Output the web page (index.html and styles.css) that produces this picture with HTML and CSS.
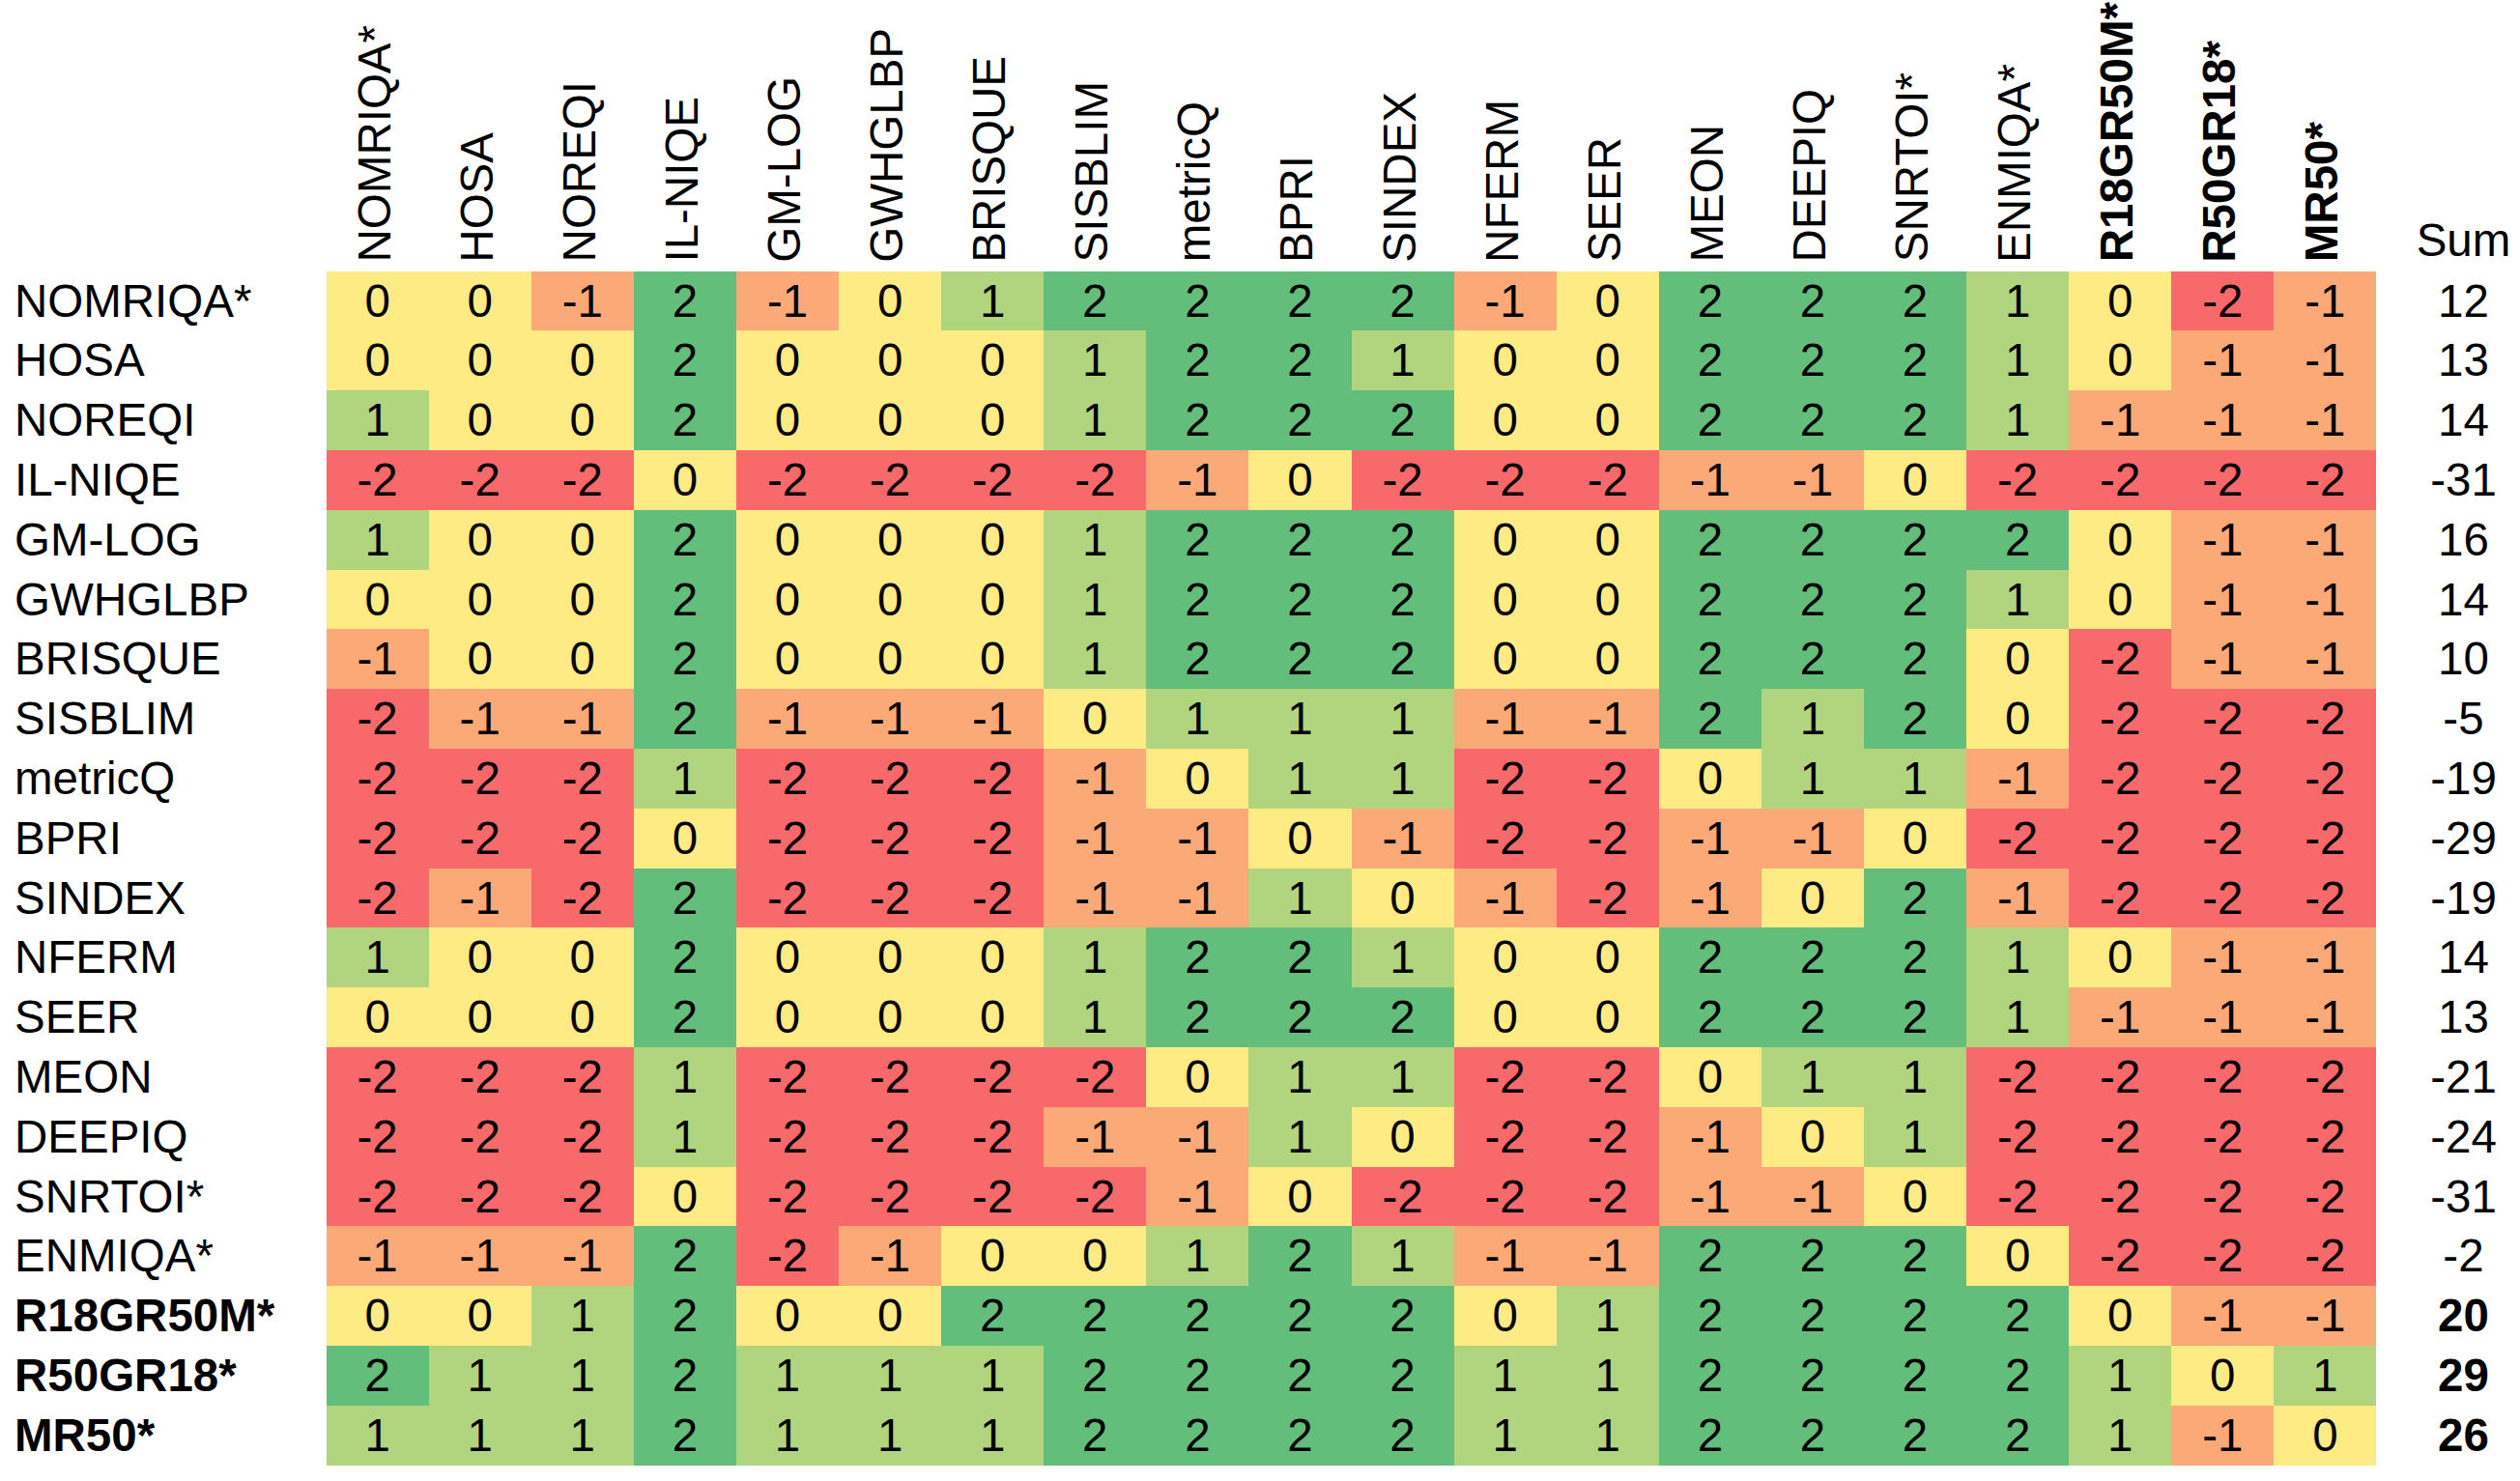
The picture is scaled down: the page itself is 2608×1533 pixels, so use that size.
FILE: index.html
```html
<!DOCTYPE html>
<html lang="en">
<head>
<meta charset="utf-8">
<title>Pairwise comparison matrix</title>
<link rel="stylesheet" href="styles.css">
</head>
<body>
<div class="matrix">
  <div class="corner"></div>
  <div class="hd"><span class="vt">NOMRIQA*</span></div>
  <div class="hd"><span class="vt">HOSA</span></div>
  <div class="hd"><span class="vt">NOREQI</span></div>
  <div class="hd"><span class="vt">IL-NIQE</span></div>
  <div class="hd"><span class="vt">GM-LOG</span></div>
  <div class="hd"><span class="vt">GWHGLBP</span></div>
  <div class="hd"><span class="vt">BRISQUE</span></div>
  <div class="hd"><span class="vt">SISBLIM</span></div>
  <div class="hd"><span class="vt">metricQ</span></div>
  <div class="hd"><span class="vt">BPRI</span></div>
  <div class="hd"><span class="vt">SINDEX</span></div>
  <div class="hd"><span class="vt">NFERM</span></div>
  <div class="hd"><span class="vt">SEER</span></div>
  <div class="hd"><span class="vt">MEON</span></div>
  <div class="hd"><span class="vt">DEEPIQ</span></div>
  <div class="hd"><span class="vt">SNRTOI*</span></div>
  <div class="hd"><span class="vt">ENMIQA*</span></div>
  <div class="hd"><span class="vt bold">R18GR50M*</span></div>
  <div class="hd"><span class="vt bold">R50GR18*</span></div>
  <div class="hd"><span class="vt bold">MR50*</span></div>
  <div class="sumhd">Sum</div>

  <div class="rl">NOMRIQA*</div>
  <div class="c z">0</div><div class="c z">0</div><div class="c n1">-1</div><div class="c p2">2</div><div class="c n1">-1</div><div class="c z">0</div><div class="c p1">1</div><div class="c p2">2</div><div class="c p2">2</div><div class="c p2">2</div><div class="c p2">2</div><div class="c n1">-1</div><div class="c z">0</div><div class="c p2">2</div><div class="c p2">2</div><div class="c p2">2</div><div class="c p1">1</div><div class="c z">0</div><div class="c n2">-2</div><div class="c n1">-1</div>
  <div class="sum">12</div>

  <div class="rl">HOSA</div>
  <div class="c z">0</div><div class="c z">0</div><div class="c z">0</div><div class="c p2">2</div><div class="c z">0</div><div class="c z">0</div><div class="c z">0</div><div class="c p1">1</div><div class="c p2">2</div><div class="c p2">2</div><div class="c p1">1</div><div class="c z">0</div><div class="c z">0</div><div class="c p2">2</div><div class="c p2">2</div><div class="c p2">2</div><div class="c p1">1</div><div class="c z">0</div><div class="c n1">-1</div><div class="c n1">-1</div>
  <div class="sum">13</div>

  <div class="rl">NOREQI</div>
  <div class="c p1">1</div><div class="c z">0</div><div class="c z">0</div><div class="c p2">2</div><div class="c z">0</div><div class="c z">0</div><div class="c z">0</div><div class="c p1">1</div><div class="c p2">2</div><div class="c p2">2</div><div class="c p2">2</div><div class="c z">0</div><div class="c z">0</div><div class="c p2">2</div><div class="c p2">2</div><div class="c p2">2</div><div class="c p1">1</div><div class="c n1">-1</div><div class="c n1">-1</div><div class="c n1">-1</div>
  <div class="sum">14</div>

  <div class="rl">IL-NIQE</div>
  <div class="c n2">-2</div><div class="c n2">-2</div><div class="c n2">-2</div><div class="c z">0</div><div class="c n2">-2</div><div class="c n2">-2</div><div class="c n2">-2</div><div class="c n2">-2</div><div class="c n1">-1</div><div class="c z">0</div><div class="c n2">-2</div><div class="c n2">-2</div><div class="c n2">-2</div><div class="c n1">-1</div><div class="c n1">-1</div><div class="c z">0</div><div class="c n2">-2</div><div class="c n2">-2</div><div class="c n2">-2</div><div class="c n2">-2</div>
  <div class="sum">-31</div>

  <div class="rl">GM-LOG</div>
  <div class="c p1">1</div><div class="c z">0</div><div class="c z">0</div><div class="c p2">2</div><div class="c z">0</div><div class="c z">0</div><div class="c z">0</div><div class="c p1">1</div><div class="c p2">2</div><div class="c p2">2</div><div class="c p2">2</div><div class="c z">0</div><div class="c z">0</div><div class="c p2">2</div><div class="c p2">2</div><div class="c p2">2</div><div class="c p2">2</div><div class="c z">0</div><div class="c n1">-1</div><div class="c n1">-1</div>
  <div class="sum">16</div>

  <div class="rl">GWHGLBP</div>
  <div class="c z">0</div><div class="c z">0</div><div class="c z">0</div><div class="c p2">2</div><div class="c z">0</div><div class="c z">0</div><div class="c z">0</div><div class="c p1">1</div><div class="c p2">2</div><div class="c p2">2</div><div class="c p2">2</div><div class="c z">0</div><div class="c z">0</div><div class="c p2">2</div><div class="c p2">2</div><div class="c p2">2</div><div class="c p1">1</div><div class="c z">0</div><div class="c n1">-1</div><div class="c n1">-1</div>
  <div class="sum">14</div>

  <div class="rl">BRISQUE</div>
  <div class="c n1">-1</div><div class="c z">0</div><div class="c z">0</div><div class="c p2">2</div><div class="c z">0</div><div class="c z">0</div><div class="c z">0</div><div class="c p1">1</div><div class="c p2">2</div><div class="c p2">2</div><div class="c p2">2</div><div class="c z">0</div><div class="c z">0</div><div class="c p2">2</div><div class="c p2">2</div><div class="c p2">2</div><div class="c z">0</div><div class="c n2">-2</div><div class="c n1">-1</div><div class="c n1">-1</div>
  <div class="sum">10</div>

  <div class="rl">SISBLIM</div>
  <div class="c n2">-2</div><div class="c n1">-1</div><div class="c n1">-1</div><div class="c p2">2</div><div class="c n1">-1</div><div class="c n1">-1</div><div class="c n1">-1</div><div class="c z">0</div><div class="c p1">1</div><div class="c p1">1</div><div class="c p1">1</div><div class="c n1">-1</div><div class="c n1">-1</div><div class="c p2">2</div><div class="c p1">1</div><div class="c p2">2</div><div class="c z">0</div><div class="c n2">-2</div><div class="c n2">-2</div><div class="c n2">-2</div>
  <div class="sum">-5</div>

  <div class="rl">metricQ</div>
  <div class="c n2">-2</div><div class="c n2">-2</div><div class="c n2">-2</div><div class="c p1">1</div><div class="c n2">-2</div><div class="c n2">-2</div><div class="c n2">-2</div><div class="c n1">-1</div><div class="c z">0</div><div class="c p1">1</div><div class="c p1">1</div><div class="c n2">-2</div><div class="c n2">-2</div><div class="c z">0</div><div class="c p1">1</div><div class="c p1">1</div><div class="c n1">-1</div><div class="c n2">-2</div><div class="c n2">-2</div><div class="c n2">-2</div>
  <div class="sum">-19</div>

  <div class="rl">BPRI</div>
  <div class="c n2">-2</div><div class="c n2">-2</div><div class="c n2">-2</div><div class="c z">0</div><div class="c n2">-2</div><div class="c n2">-2</div><div class="c n2">-2</div><div class="c n1">-1</div><div class="c n1">-1</div><div class="c z">0</div><div class="c n1">-1</div><div class="c n2">-2</div><div class="c n2">-2</div><div class="c n1">-1</div><div class="c n1">-1</div><div class="c z">0</div><div class="c n2">-2</div><div class="c n2">-2</div><div class="c n2">-2</div><div class="c n2">-2</div>
  <div class="sum">-29</div>

  <div class="rl">SINDEX</div>
  <div class="c n2">-2</div><div class="c n1">-1</div><div class="c n2">-2</div><div class="c p2">2</div><div class="c n2">-2</div><div class="c n2">-2</div><div class="c n2">-2</div><div class="c n1">-1</div><div class="c n1">-1</div><div class="c p1">1</div><div class="c z">0</div><div class="c n1">-1</div><div class="c n2">-2</div><div class="c n1">-1</div><div class="c z">0</div><div class="c p2">2</div><div class="c n1">-1</div><div class="c n2">-2</div><div class="c n2">-2</div><div class="c n2">-2</div>
  <div class="sum">-19</div>

  <div class="rl">NFERM</div>
  <div class="c p1">1</div><div class="c z">0</div><div class="c z">0</div><div class="c p2">2</div><div class="c z">0</div><div class="c z">0</div><div class="c z">0</div><div class="c p1">1</div><div class="c p2">2</div><div class="c p2">2</div><div class="c p1">1</div><div class="c z">0</div><div class="c z">0</div><div class="c p2">2</div><div class="c p2">2</div><div class="c p2">2</div><div class="c p1">1</div><div class="c z">0</div><div class="c n1">-1</div><div class="c n1">-1</div>
  <div class="sum">14</div>

  <div class="rl">SEER</div>
  <div class="c z">0</div><div class="c z">0</div><div class="c z">0</div><div class="c p2">2</div><div class="c z">0</div><div class="c z">0</div><div class="c z">0</div><div class="c p1">1</div><div class="c p2">2</div><div class="c p2">2</div><div class="c p2">2</div><div class="c z">0</div><div class="c z">0</div><div class="c p2">2</div><div class="c p2">2</div><div class="c p2">2</div><div class="c p1">1</div><div class="c n1">-1</div><div class="c n1">-1</div><div class="c n1">-1</div>
  <div class="sum">13</div>

  <div class="rl">MEON</div>
  <div class="c n2">-2</div><div class="c n2">-2</div><div class="c n2">-2</div><div class="c p1">1</div><div class="c n2">-2</div><div class="c n2">-2</div><div class="c n2">-2</div><div class="c n2">-2</div><div class="c z">0</div><div class="c p1">1</div><div class="c p1">1</div><div class="c n2">-2</div><div class="c n2">-2</div><div class="c z">0</div><div class="c p1">1</div><div class="c p1">1</div><div class="c n2">-2</div><div class="c n2">-2</div><div class="c n2">-2</div><div class="c n2">-2</div>
  <div class="sum">-21</div>

  <div class="rl">DEEPIQ</div>
  <div class="c n2">-2</div><div class="c n2">-2</div><div class="c n2">-2</div><div class="c p1">1</div><div class="c n2">-2</div><div class="c n2">-2</div><div class="c n2">-2</div><div class="c n1">-1</div><div class="c n1">-1</div><div class="c p1">1</div><div class="c z">0</div><div class="c n2">-2</div><div class="c n2">-2</div><div class="c n1">-1</div><div class="c z">0</div><div class="c p1">1</div><div class="c n2">-2</div><div class="c n2">-2</div><div class="c n2">-2</div><div class="c n2">-2</div>
  <div class="sum">-24</div>

  <div class="rl">SNRTOI*</div>
  <div class="c n2">-2</div><div class="c n2">-2</div><div class="c n2">-2</div><div class="c z">0</div><div class="c n2">-2</div><div class="c n2">-2</div><div class="c n2">-2</div><div class="c n2">-2</div><div class="c n1">-1</div><div class="c z">0</div><div class="c n2">-2</div><div class="c n2">-2</div><div class="c n2">-2</div><div class="c n1">-1</div><div class="c n1">-1</div><div class="c z">0</div><div class="c n2">-2</div><div class="c n2">-2</div><div class="c n2">-2</div><div class="c n2">-2</div>
  <div class="sum">-31</div>

  <div class="rl">ENMIQA*</div>
  <div class="c n1">-1</div><div class="c n1">-1</div><div class="c n1">-1</div><div class="c p2">2</div><div class="c n2">-2</div><div class="c n1">-1</div><div class="c z">0</div><div class="c z">0</div><div class="c p1">1</div><div class="c p2">2</div><div class="c p1">1</div><div class="c n1">-1</div><div class="c n1">-1</div><div class="c p2">2</div><div class="c p2">2</div><div class="c p2">2</div><div class="c z">0</div><div class="c n2">-2</div><div class="c n2">-2</div><div class="c n2">-2</div>
  <div class="sum">-2</div>

  <div class="rl bold">R18GR50M*</div>
  <div class="c z">0</div><div class="c z">0</div><div class="c p1">1</div><div class="c p2">2</div><div class="c z">0</div><div class="c z">0</div><div class="c p2">2</div><div class="c p2">2</div><div class="c p2">2</div><div class="c p2">2</div><div class="c p2">2</div><div class="c z">0</div><div class="c p1">1</div><div class="c p2">2</div><div class="c p2">2</div><div class="c p2">2</div><div class="c p2">2</div><div class="c z">0</div><div class="c n1">-1</div><div class="c n1">-1</div>
  <div class="sum bold">20</div>

  <div class="rl bold">R50GR18*</div>
  <div class="c p2">2</div><div class="c p1">1</div><div class="c p1">1</div><div class="c p2">2</div><div class="c p1">1</div><div class="c p1">1</div><div class="c p1">1</div><div class="c p2">2</div><div class="c p2">2</div><div class="c p2">2</div><div class="c p2">2</div><div class="c p1">1</div><div class="c p1">1</div><div class="c p2">2</div><div class="c p2">2</div><div class="c p2">2</div><div class="c p2">2</div><div class="c p1">1</div><div class="c z">0</div><div class="c p1">1</div>
  <div class="sum bold">29</div>

  <div class="rl bold">MR50*</div>
  <div class="c p1">1</div><div class="c p1">1</div><div class="c p1">1</div><div class="c p2">2</div><div class="c p1">1</div><div class="c p1">1</div><div class="c p1">1</div><div class="c p2">2</div><div class="c p2">2</div><div class="c p2">2</div><div class="c p2">2</div><div class="c p1">1</div><div class="c p1">1</div><div class="c p2">2</div><div class="c p2">2</div><div class="c p2">2</div><div class="c p2">2</div><div class="c p1">1</div><div class="c n1">-1</div><div class="c z">0</div>
  <div class="sum bold">26</div>
</div>
</body>
</html>
```

FILE: styles.css
```css
html, body {
  margin: 0;
  padding: 0;
  background: #ffffff;
}

body {
  font-family: "Liberation Sans", Arial, Helvetica, sans-serif;
  font-size: 47.5px;
  line-height: 46px;
  color: #000000;
  overflow: hidden;
}

.matrix {
  display: grid;
  grid-template-columns: 337.6px repeat(20, 106.1px) 148px;
  grid-template-rows: 280.7px repeat(20, 61.8px);
  width: 2607.6px;
}

.bold {
  font-weight: bold;
}

.hd {
  display: flex;
  flex-direction: column;
  justify-content: flex-end;
  align-items: center;
  padding-bottom: 9px;
  box-sizing: border-box;
}

.vt {
  writing-mode: vertical-rl;
  transform: rotate(180deg);
  white-space: nowrap;
  line-height: 46px;
  margin-right: 6px;
}

.sumhd {
  display: flex;
  align-items: flex-end;
  justify-content: center;
  padding-left: 32px;
  padding-bottom: 9px;
  box-sizing: border-box;
}

.rl {
  display: flex;
  align-items: center;
  padding-left: 15px;
  white-space: nowrap;
}

.c {
  display: flex;
  align-items: center;
  justify-content: center;
}

.sum {
  display: flex;
  align-items: center;
  justify-content: center;
  padding-left: 32px;
}

.p2 { background: #63be7b; }
.p1 { background: #b1d47f; }
.z  { background: #ffeb84; }
.n1 { background: #fbaa77; }
.n2 { background: #f8696b; }
```
